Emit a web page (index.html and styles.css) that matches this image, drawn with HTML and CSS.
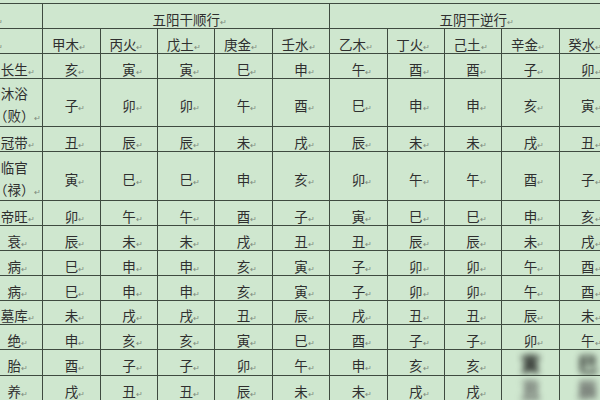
FILE: index.html
```html
<!DOCTYPE html>
<html lang="zh">
<head>
<meta charset="utf-8">
<title>十二长生表</title>
<link rel="stylesheet" href="styles.css">
</head>
<body>
<table class="grid">
  <colgroup>
    <col><col><col><col><col><col><col><col><col><col><col>
  </colgroup>
  <tr class="r25">
    <td class="corner"><i class="pm">↵</i></td>
    <td colspan="5" class="top">五阳干顺行<i class="pm">↵</i></td>
    <td colspan="5" class="top">五阴干逆行<i class="pm">↵</i></td>
  </tr>
  <tr class="r25">
    <td class="corner"><i class="pm">↵</i></td>
    <td class="hd">甲木<i class="pm">↵</i></td>
    <td class="hd">丙火<i class="pm">↵</i></td>
    <td class="hd">戊土<i class="pm">↵</i></td>
    <td class="hd">庚金<i class="pm">↵</i></td>
    <td class="hd">壬水<i class="pm">↵</i></td>
    <td class="hd">乙木<i class="pm">↵</i></td>
    <td class="hd">丁火<i class="pm">↵</i></td>
    <td class="hd">己土<i class="pm">↵</i></td>
    <td class="hd">辛金<i class="pm">↵</i></td>
    <td class="hd">癸水<i class="pm">↵</i></td>
  </tr>
  <tr class="r25">
    <td>长生<i class="pm">↵</i></td>
    <td>亥<i class="pm">↵</i></td><td>寅<i class="pm">↵</i></td><td>寅<i class="pm">↵</i></td><td>巳<i class="pm">↵</i></td><td>申<i class="pm">↵</i></td>
    <td>午<i class="pm">↵</i></td><td>酉<i class="pm">↵</i></td><td>酉<i class="pm">↵</i></td><td>子<i class="pm">↵</i></td><td>卯<i class="pm">↵</i></td>
  </tr>
  <tr class="r47">
    <td class="two">沐浴<br><span class="po">（</span>败<span class="pc">）</span><i class="pm">↵</i></td>
    <td>子<i class="pm">↵</i></td><td>卯<i class="pm">↵</i></td><td>卯<i class="pm">↵</i></td><td>午<i class="pm">↵</i></td><td>酉<i class="pm">↵</i></td>
    <td>巳<i class="pm">↵</i></td><td>申<i class="pm">↵</i></td><td>申<i class="pm">↵</i></td><td>亥<i class="pm">↵</i></td><td>寅<i class="pm">↵</i></td>
  </tr>
  <tr class="r25">
    <td>冠带<i class="pm">↵</i></td>
    <td>丑<i class="pm">↵</i></td><td>辰<i class="pm">↵</i></td><td>辰<i class="pm">↵</i></td><td>未<i class="pm">↵</i></td><td>戌<i class="pm">↵</i></td>
    <td>辰<i class="pm">↵</i></td><td>未<i class="pm">↵</i></td><td>未<i class="pm">↵</i></td><td>戌<i class="pm">↵</i></td><td>丑<i class="pm">↵</i></td>
  </tr>
  <tr class="r49">
    <td class="two">临官<br><span class="po">（</span>禄<span class="pc">）</span><i class="pm">↵</i></td>
    <td>寅<i class="pm">↵</i></td><td>巳<i class="pm">↵</i></td><td>巳<i class="pm">↵</i></td><td>申<i class="pm">↵</i></td><td>亥<i class="pm">↵</i></td>
    <td>卯<i class="pm">↵</i></td><td>午<i class="pm">↵</i></td><td>午<i class="pm">↵</i></td><td>酉<i class="pm">↵</i></td><td>子<i class="pm">↵</i></td>
  </tr>
  <tr class="r25">
    <td>帝旺<i class="pm">↵</i></td>
    <td>卯<i class="pm">↵</i></td><td>午<i class="pm">↵</i></td><td>午<i class="pm">↵</i></td><td>酉<i class="pm">↵</i></td><td>子<i class="pm">↵</i></td>
    <td>寅<i class="pm">↵</i></td><td>巳<i class="pm">↵</i></td><td>巳<i class="pm">↵</i></td><td>申<i class="pm">↵</i></td><td>亥<i class="pm">↵</i></td>
  </tr>
  <tr class="r25">
    <td>衰<i class="pm">↵</i></td>
    <td>辰<i class="pm">↵</i></td><td>未<i class="pm">↵</i></td><td>未<i class="pm">↵</i></td><td>戌<i class="pm">↵</i></td><td>丑<i class="pm">↵</i></td>
    <td>丑<i class="pm">↵</i></td><td>辰<i class="pm">↵</i></td><td>辰<i class="pm">↵</i></td><td>未<i class="pm">↵</i></td><td>戌<i class="pm">↵</i></td>
  </tr>
  <tr class="r25">
    <td>病<i class="pm">↵</i></td>
    <td>巳<i class="pm">↵</i></td><td>申<i class="pm">↵</i></td><td>申<i class="pm">↵</i></td><td>亥<i class="pm">↵</i></td><td>寅<i class="pm">↵</i></td>
    <td>子<i class="pm">↵</i></td><td>卯<i class="pm">↵</i></td><td>卯<i class="pm">↵</i></td><td>午<i class="pm">↵</i></td><td>酉<i class="pm">↵</i></td>
  </tr>
  <tr class="r25">
    <td>病<i class="pm">↵</i></td>
    <td>巳<i class="pm">↵</i></td><td>申<i class="pm">↵</i></td><td>申<i class="pm">↵</i></td><td>亥<i class="pm">↵</i></td><td>寅<i class="pm">↵</i></td>
    <td>子<i class="pm">↵</i></td><td>卯<i class="pm">↵</i></td><td>卯<i class="pm">↵</i></td><td>午<i class="pm">↵</i></td><td>酉<i class="pm">↵</i></td>
  </tr>
  <tr class="r24">
    <td>墓库<i class="pm">↵</i></td>
    <td>未<i class="pm">↵</i></td><td>戌<i class="pm">↵</i></td><td>戌<i class="pm">↵</i></td><td>丑<i class="pm">↵</i></td><td>辰<i class="pm">↵</i></td>
    <td>戌<i class="pm">↵</i></td><td>丑<i class="pm">↵</i></td><td>丑<i class="pm">↵</i></td><td>辰<i class="pm">↵</i></td><td>未<i class="pm">↵</i></td>
  </tr>
  <tr class="r25">
    <td>绝<i class="pm">↵</i></td>
    <td>申<i class="pm">↵</i></td><td>亥<i class="pm">↵</i></td><td>亥<i class="pm">↵</i></td><td>寅<i class="pm">↵</i></td><td>巳<i class="pm">↵</i></td>
    <td>酉<i class="pm">↵</i></td><td>子<i class="pm">↵</i></td><td>子<i class="pm">↵</i></td><td>卯<i class="pm">↵</i></td><td>午<i class="pm">↵</i></td>
  </tr>
  <tr class="r25">
    <td>胎<i class="pm">↵</i></td>
    <td>酉<i class="pm">↵</i></td><td>子<i class="pm">↵</i></td><td>子<i class="pm">↵</i></td><td>卯<i class="pm">↵</i></td><td>午<i class="pm">↵</i></td>
    <td>申<i class="pm">↵</i></td><td>亥<i class="pm">↵</i></td><td>亥<i class="pm">↵</i></td><td><span class="wm">寅</span></td><td><span class="wm">巳</span></td>
  </tr>
  <tr class="r24">
    <td>养<i class="pm">↵</i></td>
    <td>戌<i class="pm">↵</i></td><td>丑<i class="pm">↵</i></td><td>丑<i class="pm">↵</i></td><td>辰<i class="pm">↵</i></td><td>未<i class="pm">↵</i></td>
    <td>未<i class="pm">↵</i></td><td>戌<i class="pm">↵</i></td><td>戌<i class="pm">↵</i></td><td><span class="wm lt">丑</span></td><td><span class="wm lt">辰</span></td>
  </tr>
</table>
</body>
</html>
```

FILE: styles.css
```css
html, body {
  margin: 0;
  padding: 0;
  background: #cfe7cf;
  overflow: hidden;
}

body {
  width: 600px;
  height: 400px;
  font-family: "Noto Sans CJK SC", "Noto Sans", sans-serif;
}

.grid {
  border-collapse: separate;
  border-spacing: 0;
  table-layout: fixed;
  width: 632px;
  margin-left: -15px;
  margin-top: 3px;
  border-top: 1px solid #3f4b40;
  border-left: 1px solid #3f4b40;
}

.grid col {
  width: 57.36px;
}

.grid td {
  box-sizing: border-box;
  border-right: 1px solid #3f4b40;
  border-bottom: 1px solid #3f4b40;
  padding: 5px 0 0 0;
  text-align: center;
  vertical-align: middle;
  font-size: 13.5px;
  line-height: 18px;
  color: #2f2f2f;
  white-space: nowrap;
  overflow: hidden;
}

.grid td.two {
  line-height: 22px;
  padding-top: 3px;
}

.po, .pc {
  display: inline-block;
  width: 13.5px;
}

.po { text-align: right; }
.pc { text-align: left; }

.r25 td { height: 25px; }
.r24 td { height: 24px; }
.r47 td { height: 47px; }
.r49 td { height: 49px; }

.pm {
  font-style: normal;
  font-size: 8px;
  line-height: 8px;
  color: #7d8a7d;
  display: inline-block;
  width: 8px;
  margin-right: -8px;
  text-align: left;
  vertical-align: baseline;
}

.hd .pm {
  width: 12px;
  margin-right: 0;
}

.grid td.corner {
  text-align: left;
  padding-left: 10px;
}

.wm {
  display: inline-block;
  color: #111;
  font-weight: 700;
  font-size: 20px;
  line-height: 18px;
  filter: blur(3px);
}

.wm.lt {
  color: #555;
}
```
